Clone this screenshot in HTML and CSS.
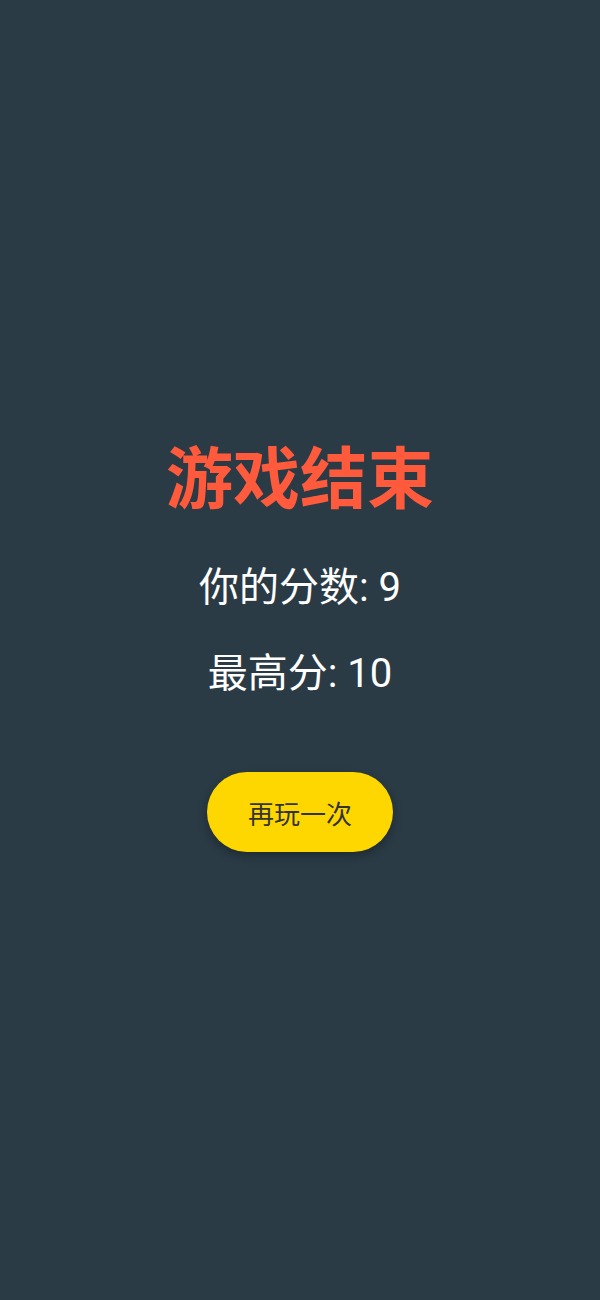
FILE: index.html
```html
<!DOCTYPE html>
<html lang="zh">
<head>
    <meta charset="UTF-8">
    <meta name="viewport" content="width=device-width, initial-scale=1.0">
    <title>游戏结束</title>
    <link rel="stylesheet" href="styles.css">
</head>
<body>
    <div class="screen">
        <div class="game-over">
            <h1 class="title">游戏结束</h1>
            <p class="score">你的分数: 9</p>
            <p class="score">最高分: 10</p>
            <button class="restart">再玩一次</button>
        </div>
    </div>
</body>
</html>
```

FILE: styles.css
```css
* {
    margin: 0;
    padding: 0;
    box-sizing: border-box;
}

body {
    background: #2a3b46;
    font-family: Roboto, "Noto Sans CJK SC", sans-serif;
}

.screen {
    height: 1300px;
    padding-bottom: 8px;
    display: flex;
    align-items: center;
    justify-content: center;
}

.game-over {
    display: flex;
    flex-direction: column;
    align-items: center;
}

.title {
    color: #ff5a3c;
    font-size: 67px;
    font-weight: bold;
    line-height: 1.2;
    margin-bottom: 44px;
}

.score {
    color: #ffffff;
    font-size: 40px;
    line-height: 1.2;
    margin-bottom: 38px;
}

.restart {
    margin-top: 36px;
    padding: 0 41px;
    height: 80px;
    border: none;
    border-radius: 40px;
    background: #ffd700;
    color: #333333;
    font-family: Roboto, "Noto Sans CJK SC", sans-serif;
    font-size: 26px;
    box-shadow: 0 4px 10px rgba(0, 0, 0, 0.3);
    cursor: pointer;
}
```
